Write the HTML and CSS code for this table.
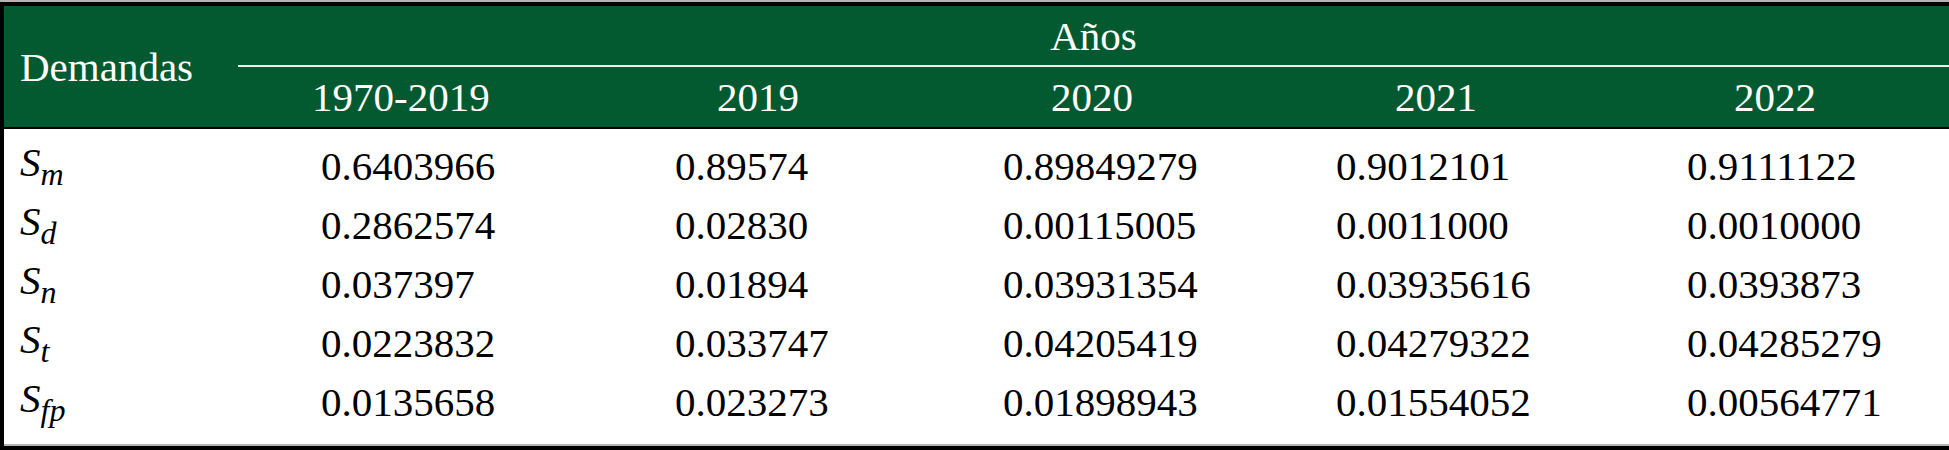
FILE: index.html
```html
<!DOCTYPE html>
<html lang="es">
  <head>
    <meta charset="UTF-8" />
    <meta name="viewport" content="width=device-width, initial-scale=1.0" />
    <title>Demandas</title>
    <link rel="stylesheet" href="styles.css">
  </head>
  <body>
    <div class="frame">
      <table class="demand">
        <colgroup>
          <col class="c-label" />
          <col class="c-1" />
          <col class="c-2" />
          <col class="c-3" />
          <col class="c-4" />
          <col class="c-5" />
        </colgroup>
        <thead>
          <tr class="top">
            <th rowspan="2" class="label">Demandas</th>
            <th colspan="5" class="years">Años</th>
          </tr>
          <tr class="sub">
            <th class="y1">1970-2019</th>
            <th class="y2">2019</th>
            <th class="y3">2020</th>
            <th class="y4">2021</th>
            <th class="y5">2022</th>
          </tr>
        </thead>
        <tbody>
          <tr>
            <td class="name"><i>S</i><sub>m</sub></td>
            <td>0.6403966</td>
            <td>0.89574</td>
            <td>0.89849279</td>
            <td>0.9012101</td>
            <td>0.9111122</td>
          </tr>
          <tr>
            <td class="name"><i>S</i><sub>d</sub></td>
            <td>0.2862574</td>
            <td>0.02830</td>
            <td>0.00115005</td>
            <td>0.0011000</td>
            <td>0.0010000</td>
          </tr>
          <tr>
            <td class="name"><i>S</i><sub>n</sub></td>
            <td>0.037397</td>
            <td>0.01894</td>
            <td>0.03931354</td>
            <td>0.03935616</td>
            <td>0.0393873</td>
          </tr>
          <tr>
            <td class="name"><i>S</i><sub>t</sub></td>
            <td>0.0223832</td>
            <td>0.033747</td>
            <td>0.04205419</td>
            <td>0.04279322</td>
            <td>0.04285279</td>
          </tr>
          <tr>
            <td class="name"><i>S</i><sub>fp</sub></td>
            <td>0.0135658</td>
            <td>0.023273</td>
            <td>0.01898943</td>
            <td>0.01554052</td>
            <td>0.00564771</td>
          </tr>
        </tbody>
      </table>
    </div>
  </body>
</html>
```

FILE: styles.css
```css
html, body {
  margin: 0;
  padding: 0;
  background: #ffffff;
}

body {
  font-family: "Liberation Serif", "Times New Roman", serif;
  font-size: 41px;
  color: #000000;
}

.frame {
  border-top: 2px solid #b4b4b4;
}

.demand {
  width: 100%;
  table-layout: fixed;
  border-collapse: separate;
  border-spacing: 0;
  border-top: 4px solid #000000;
  border-left: 4px solid #000000;
  border-bottom: 4px solid #000000;
}

.c-label { width: 234px; }
.c-1 { width: 354px; }
.c-2 { width: 328px; }
.c-3 { width: 333px; }
.c-4 { width: 351px; }
.c-5 { width: 345px; }

th {
  background: #035a31;
  color: #ffffff;
  font-weight: normal;
  text-align: left;
  padding: 0;
  white-space: nowrap;
}

.label {
  padding-left: 16px;
  border-bottom: 2px solid #000000;
  line-height: 40px;
}

.top .years {
  height: 57px;
  padding-top: 2px;
  line-height: 57px;
  text-align: center;
  border-bottom: 2px solid #eeeeee;
}

.sub th {
  height: 59px;
  padding-top: 1px;
  line-height: 59px;
  border-bottom: 2px solid #000000;
}

.sub .y1 { padding-left: 74px; }
.sub .y2 { padding-left: 125px; }
.sub .y3 { padding-left: 131px; }
.sub .y4 { padding-left: 142px; }
.sub .y5 { padding-left: 130px; }

td {
  padding: 0 0 0 83px;
  height: 59px;
  line-height: 59px;
  white-space: nowrap;
}

td.name {
  padding-left: 16px;
}

tbody tr:first-child td {
  padding-top: 8px;
}

tbody tr:last-child td {
  padding-bottom: 12px;
  border-bottom: 2px solid #b4b4b4;
}

.name i {
  font-style: italic;
  line-height: 1;
  vertical-align: 4px;
}

.name sub {
  font-style: italic;
  font-size: 32px;
  line-height: 0;
  vertical-align: -5px;
}
```
